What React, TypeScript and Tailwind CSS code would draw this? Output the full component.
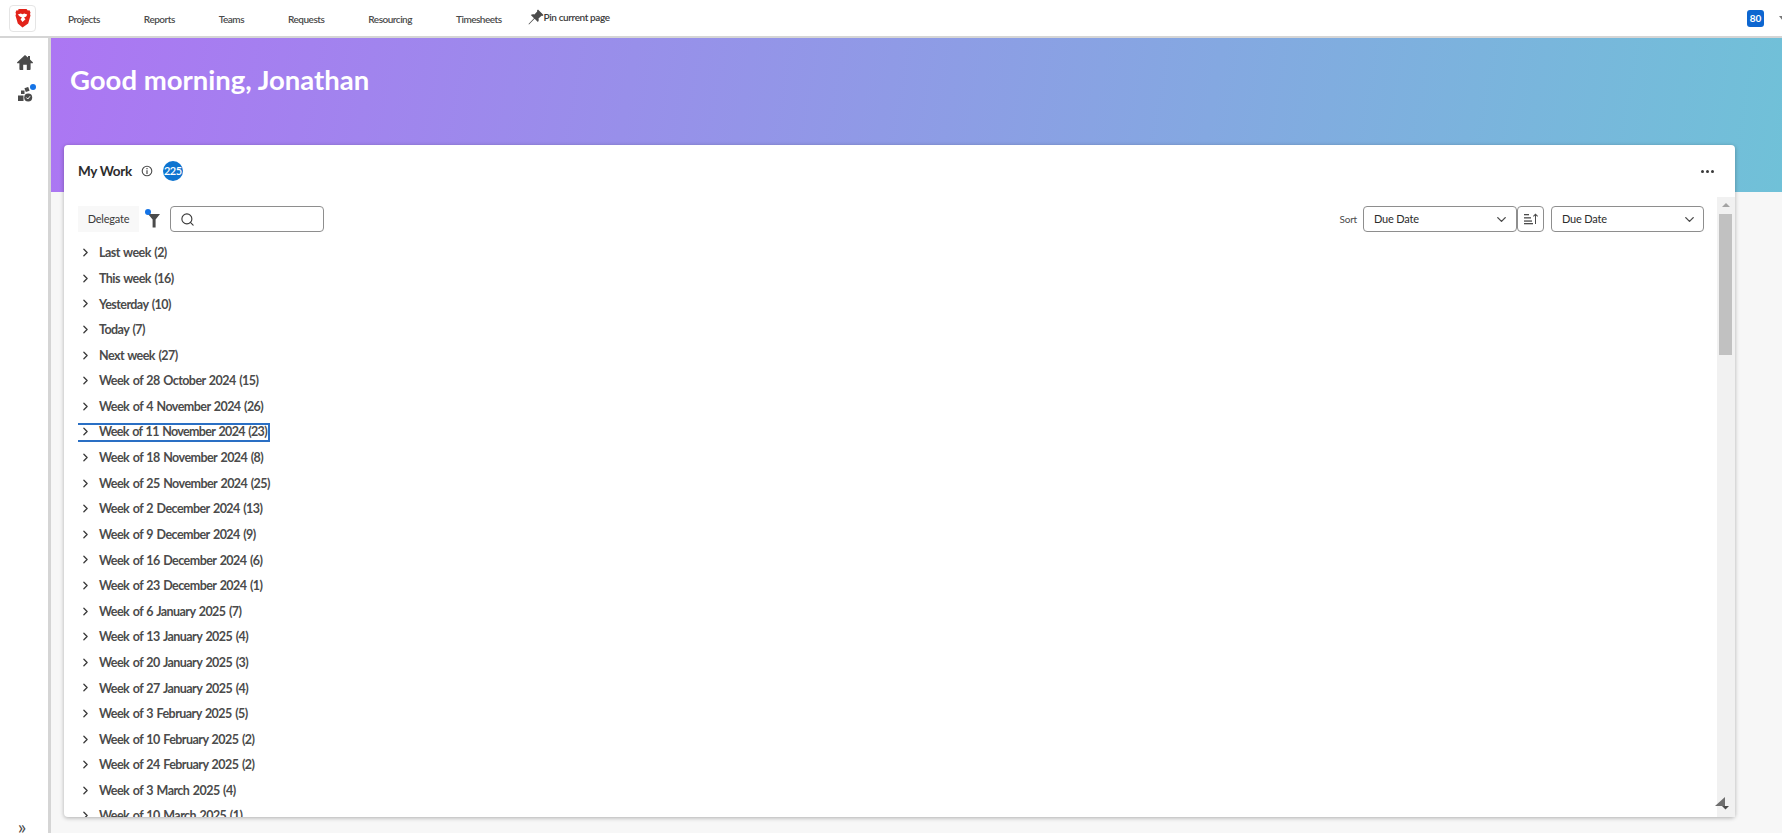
import React from "react";
import { ChevronDown, ChevronRight, Search } from "lucide-react";

const NAV_ITEMS = ["Projects", "Reports", "Teams", "Requests", "Resourcing", "Timesheets"];

const WEEKS = [
  "Last week (2)",
  "This week (16)",
  "Yesterday (10)",
  "Today (7)",
  "Next week (27)",
  "Week of 28 October 2024 (15)",
  "Week of 4 November 2024 (26)",
  "Week of 11 November 2024 (23)",
  "Week of 18 November 2024 (8)",
  "Week of 25 November 2024 (25)",
  "Week of 2 December 2024 (13)",
  "Week of 9 December 2024 (9)",
  "Week of 16 December 2024 (6)",
  "Week of 23 December 2024 (1)",
  "Week of 6 January 2025 (7)",
  "Week of 13 January 2025 (4)",
  "Week of 20 January 2025 (3)",
  "Week of 27 January 2025 (4)",
  "Week of 3 February 2025 (5)",
  "Week of 10 February 2025 (2)",
  "Week of 24 February 2025 (2)",
  "Week of 3 March 2025 (4)",
  "Week of 10 March 2025 (1)",
];

const Logo = () => (
  <svg width="17" height="20" viewBox="0 0 17 20">
    <path d="M4.500 1h8l1.300 1.400 1.700-.2 1 2.300-.5 1.500.5 1.500-2.300 8L8.500 19.500 3.800 15.500l-2.300-8L2 6 1.500 4.500l1-2.300 1.700.2z" fill="#e2231a" />
    <path d="M3.800 6.500 6.800 5.500 8.500 6.300 10.200 5.500l3 1-1 2-2.200 1 1.500 1.800L8.500 14 6.500 11.300 8 9.500l-2.200-1z" fill="#fff" />
  </svg>
);

const HomeIcon = () => (
  <svg width="16" height="15" viewBox="0 0 16 15" fill="#4b4b4b">
    <path d="M8 0 .2 7.300c-.4.400-.1 1 .4 1H2.400V14.200c0 .4.300.8.800.8h3V9.800h3.600V15h3c.4 0 .8-.4.8-.8V8.300h1.800c.5 0 .8-.6.400-1L13 4.500V1h-2v1.600z" />
  </svg>
);

const WorkIcon = () => (
  <svg width="15" height="15" viewBox="0 0 15 15">
    <rect x="7" y="0.500" width="4" height="4" fill="#4b4b4b" transform="rotate(-20 9 2.500)" />
    <rect x="3" y="3.500" width="3.500" height="3.500" fill="#4b4b4b" />
    <rect x="0" y="8.500" width="5.500" height="5.500" fill="#4b4b4b" />
    <circle cx="10.200" cy="10.500" r="4" fill="#4b4b4b" />
    <path d="M8.300 10.500l1.500 1.500 2.300-2.800" fill="none" stroke="#fff" strokeWidth="1" />
  </svg>
);

const PinIcon = () => (
  <svg width="16" height="16" viewBox="0 0 16 16" fill="#4b4b4b">
    <path d="M10 .5 15.500 6l-1 1-1-.3-3 2.800c.5 1.500.2 2.700-.6 3.600L6.600 9.800 1 15.500l-.5-.5 5.500-5.800L2.800 6c.9-.8 2.100-1.100 3.600-.6l2.800-3-.2-1z" />
  </svg>
);

const FilterIcon = () => (
  <svg width="12" height="15" viewBox="0 0 12 15" fill="#4b4b4b">
    <path d="M0 1h12L7.600 6.500V14.500H4.600V6.500z" />
  </svg>
);

const SortIcon = () => (
  <svg width="14" height="12" viewBox="0 0 14 12" fill="#4b4b4b">
    <rect x="0" y="1" width="5" height="1.300" />
    <rect x="0" y="4.200" width="7" height="1.300" />
    <rect x="0" y="7.400" width="8" height="1.300" />
    <rect x="0" y="10" width="9" height="1.300" />
    <path d="M11 11V2.500L9.700 3.800 9 3l2.500-2.500L14 3l-.7.800L12 2.500V11z" />
  </svg>
);

const SelectBox = ({ width }: { width: string }) => (
  <div className={`flex h-[26px] items-center justify-between rounded-[4px] border border-[#8e8e8e] bg-white pl-[10px] text-[11px] tracking-[-0.2px] text-[#2c2c2c] ${width}`}>
    <span>Due Date</span>
    <ChevronDown size={15} strokeWidth={2.2} color="#4b4b4b" />
  </div>
);

const WeekRow = ({ label, focused }: { label: string; focused: boolean }) => (
  <div className="h-[25.6px] shrink-0">
    <div
      className={
        focused
          ? "mt-[3px] flex h-[19px] w-[192px] items-center border-y-2 border-r-2 border-[#2a6fc4] pl-[1px]"
          : "flex h-[25.6px] items-center pl-[1px]"
      }
    >
      <ChevronRight size={13} strokeWidth={2.4} color="#3a3a3a" className="mr-[7px] -mt-[2px] shrink-0" />
      <span
        className={
          focused
            ? "whitespace-nowrap text-[12.5px] font-bold tracking-[-0.65px] text-[#4b4b4b] [word-spacing:1px]"
            : "whitespace-nowrap text-[12.5px] font-bold tracking-[-0.55px] text-[#4b4b4b] [word-spacing:1px]"
        }
      >
        {label}
      </span>
    </div>
  </div>
);

export default function App() {
  return (
    <div className="flex h-[833px] w-[1782px] flex-col overflow-hidden bg-[#f7f7f7] font-['Lato','Liberation_Sans',sans-serif]">
      <header className="flex h-[38px] shrink-0 items-center overflow-hidden border-b-2 border-[#d5d5d5] bg-white">
        <div className="ml-[9px] flex h-[27px] w-[27px] items-center justify-center rounded-[4px] border border-[#e5e5e5]">
          <Logo />
        </div>
        <nav className="ml-[32px] mt-[2px] flex items-center gap-[44px] text-[10px] font-semibold tracking-[-0.5px] text-[#4b4b4b]">
          {NAV_ITEMS.map((item) => (
            <span key={item}>{item}</span>
          ))}
        </nav>
        <div className="-mt-[2px] ml-[26px] flex items-center text-[10px] font-semibold tracking-[-0.4px] text-[#3a3a3a]">
          <PinIcon />
          <span>Pin current page</span>
        </div>
        <div className="-mr-[5px] ml-auto flex items-center">
          <div className="flex h-[17px] w-[17px] items-center justify-center rounded-[3px] bg-[#0d66d0] text-[10px] font-bold text-white">
            80
          </div>
          <div className="ml-[15px] h-0 w-0 border-x-[4px] border-t-[5px] border-x-transparent border-t-[#777]" />
        </div>
      </header>

      <div className="flex min-h-0 flex-1">
        <aside className="flex w-[51px] shrink-0 flex-col items-center border-r-[3px] border-[#d5d5d5] bg-white pl-[2px]">
          <div className="mt-[17px]">
            <HomeIcon />
          </div>
          <div className="relative mt-[17px]">
            <WorkIcon />
            <span className="absolute -right-[3px] -top-[3px] h-[6px] w-[6px] rounded-full bg-[#1473e6]" />
          </div>
          <span className="mt-auto -mb-[3px] -ml-[6px] text-[20px] leading-none text-[#4b4b4b]">»</span>
        </aside>

        <main className="flex min-w-0 flex-1 flex-col bg-[linear-gradient(100deg,#ac76f3,#70c1d8)] bg-[length:100%_154px] bg-no-repeat pb-[16px] pl-[13px] pr-[47px]">
          <h1 className="ml-[6px] mt-[20px] h-[87px] text-[27.5px] font-bold leading-[44px] text-white">
            Good morning, Jonathan
          </h1>

          <section className="flex min-h-0 flex-1 flex-col rounded-[4px] bg-white shadow-[0_1px_4px_rgba(0,0,0,0.3)]">
            <div className="flex h-[52px] shrink-0 items-center pl-[14px] pr-[21px]">
              <span className="text-[13.5px] font-bold tracking-[-0.3px] text-[#2c2c2c]">My Work</span>
              <svg width="12" height="12" viewBox="0 0 12 12" className="ml-[9px]" fill="none" stroke="#4b4b4b">
                <circle cx="6" cy="6" r="4.800" strokeWidth="1.100" />
                <path d="M6 5.300V9M6 3v1.200" strokeWidth="1.200" />
              </svg>
              <div className="ml-[10px] flex h-[20px] w-[20px] items-center justify-center rounded-full bg-[#0d74d0] text-[11px] font-semibold tracking-[-0.4px] text-white">
                225
              </div>
              <div className="ml-auto flex gap-[2px]">
                <span className="h-[3px] w-[3px] rounded-full bg-[#3a3a3a]" />
                <span className="h-[3px] w-[3px] rounded-full bg-[#3a3a3a]" />
                <span className="h-[3px] w-[3px] rounded-full bg-[#3a3a3a]" />
              </div>
            </div>

            <div className="flex min-h-0 flex-1">
              <div className="flex min-w-0 flex-1 flex-col overflow-hidden pl-[14px] pr-[13px] pt-[9px]">
                <div className="flex h-[26px] shrink-0 items-center">
                  <button className="h-[26px] w-[61px] bg-[#f8f8f8] text-[11px] tracking-[-0.2px] text-[#3a3a3a]">Delegate</button>
                  <div className="relative ml-[7px] w-[24px]">
                    <span className="absolute -left-[1px] -top-[1px] z-10 h-[6px] w-[6px] rounded-full bg-[#1473e6]" />
                    <div className="pl-[2px] pt-[3px]">
                      <FilterIcon />
                    </div>
                  </div>
                  <div className="flex h-[26px] w-[154px] items-center rounded-[4px] border border-[#8e8e8e] pl-[9px]">
                    <Search size={15} strokeWidth={1.8} color="#3a3a3a" />
                  </div>
                  <span className="ml-auto mr-[6px] text-[10px] tracking-[-0.2px] text-[#4b4b4b]">Sort</span>
                  <SelectBox width="w-[154px] pr-[7px]" />
                  <div className="flex h-[26px] w-[27px] items-center justify-center rounded-[4px] border border-[#8e8e8e]">
                    <SortIcon />
                  </div>
                  <div className="ml-[7px]">
                    <SelectBox width="w-[153px] pr-[6px]" />
                  </div>
                </div>
                <div className="mt-[9px] flex min-h-0 flex-1 flex-col overflow-hidden">
                  {WEEKS.map((week) => (
                    <WeekRow key={week} label={week} focused={week.startsWith("Week of 11 November")} />
                  ))}
                </div>
              </div>

              <div className="flex w-[18px] shrink-0 flex-col items-center bg-[#f1f1f1] pr-[1px] pt-[6px]">
                <div className="h-0 w-0 border-x-[4px] border-b-[4px] border-x-transparent border-b-[#a3a3a3]" />
                <div className="mt-[7px] h-[141px] w-[13px] bg-[#c1c1c1]" />
                <svg width="15" height="13" viewBox="0 0 15 13" className="ml-[-6px] mb-[7px] mt-auto">
                  <path d="M0 9 10 0v9z" fill="#6e6e6e" />
                  <path d="M7 9h7l-3.500 3.500z" fill="#4b4b4b" />
                </svg>
              </div>
            </div>
          </section>
        </main>
      </div>
    </div>
  );
}
